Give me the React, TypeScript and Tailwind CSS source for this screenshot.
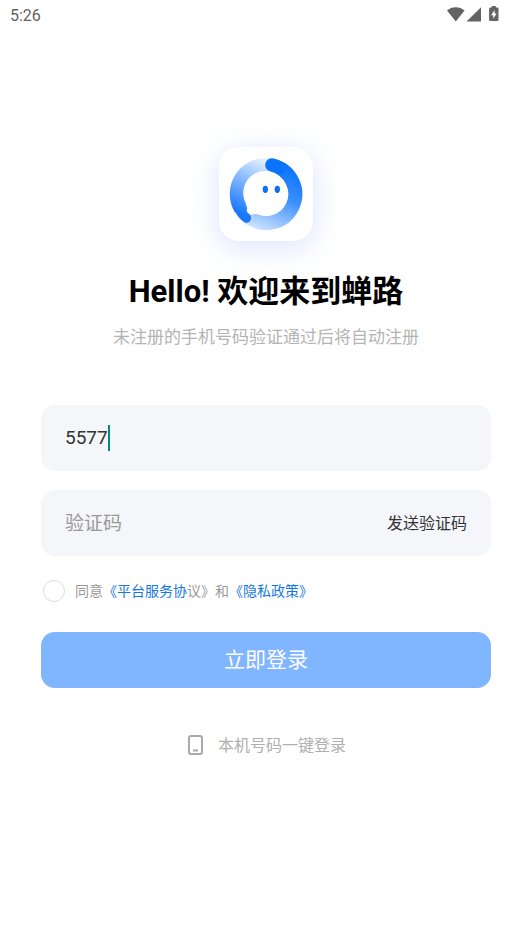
import { useState } from "react";

function StatusIcons() {
  return (
    <svg width="54" height="18" viewBox="0 0 54 18" fill="#636363" aria-hidden="true">
      <path d="M1 4.6C3.400 2.400 6.400 1.200 9.800 1.200s6.400 1.200 8.800 3.400L9.800 15.600Z" />
      <path d="M35 1.200V15.600H20.500Z" />
      <path
        fillRule="evenodd"
        d="M45.800 0h4v1.500h1.700q1 0 1 1v11.600q0 1-1 1h-7.400q-1 0-1-1V2.500q0-1 1-1h1.700ZM48.600 4l-3.600 5.200h2.200v3.600l3.400-5.200h-2Z"
      />
    </svg>
  );
}

function Logo() {
  return (
    <svg className="size-full" viewBox="0 0 282 282" role="img" aria-label="蝉路">
      <defs>
        <linearGradient id="right" gradientUnits="userSpaceOnUse" x1="200" y1="50" x2="120" y2="250">
          <stop offset="0" stopColor="#0a74fb" />
          <stop offset="0.45" stopColor="#3a8eff" />
          <stop offset="1" stopColor="#d0e4ff" />
        </linearGradient>
        <linearGradient id="left" gradientUnits="userSpaceOnUse" x1="140" y1="40" x2="60" y2="195">
          <stop offset="0" stopColor="#e6f1ff" />
          <stop offset="0.5" stopColor="#7db5ff" />
          <stop offset="1" stopColor="#1a79fb" />
        </linearGradient>
      </defs>
      <path d="M159 56A87 87 0 1 1 86 208" fill="none" stroke="url(#right)" strokeWidth="42" />
      <path d="M160 56A87 87 0 0 0 66 186" fill="none" stroke="url(#left)" strokeWidth="42" />
      <path d="M159 54A87 87 0 0 1 180 63" fill="none" stroke="#0a74fb" strokeWidth="41" strokeLinecap="round" />
      <path d="M141 72A66 66 0 1 1 128 203C116 200 106 200 94 204L80 192V168A66 66 0 0 1 141 72Z" fill="#fff" />
      {/* tapered end of the left arc */}
      <path d="M44 186C52 204 64 218 76 226C89 232 100 219 95 206C92 200 86 198 84 194C82 190 86 186 83 178L79 168Z" fill="url(#left)" />
      <ellipse cx="139" cy="127" rx="8" ry="11" fill="#0a70f5" />
      <ellipse cx="175" cy="127" rx="8" ry="11" fill="#0a70f5" />
    </svg>
  );
}

export default function App() {
  const [phone, setPhone] = useState("5577");
  const [code, setCode] = useState("");

  return (
    <div className="min-h-screen bg-white font-[Roboto,'Noto_Sans_CJK_SC',sans-serif] text-[#333]">
      <header className="flex h-[30px] items-center justify-between pr-8 pl-[10px] text-[16px] text-[#636363]">
        <time className="pt-px">5:26</time>
        <StatusIcons />
      </header>

      <main className="flex flex-col px-[41px] pt-[117px]">
        <div className="size-[94px] self-center rounded-[20px] bg-white shadow-[0_6px_28px_2px_#dfe6ff]">
          <Logo />
        </div>

        <h1 className="mt-[31px] text-center text-[31px] leading-10 font-bold text-black">Hello! 欢迎来到蝉路</h1>
        <p className="mt-[13px] text-center text-[17px] leading-6 text-[#b4b4b4]">
          未注册的手机号码验证通过后将自动注册
        </p>

        <form className="mt-14 flex flex-col" onSubmit={(e) => e.preventDefault()}>
          <div className="flex flex-col gap-[19px]">
            <label className="flex h-[66px] items-center rounded-[14px] bg-[#f5f6fa] px-6">
              <input
                type="tel"
                aria-label="手机号"
                value={phone}
                onChange={(e) => setPhone(e.target.value)}
                className="field-sizing-content text-[19px] caret-transparent outline-none"
              />
              <span className="h-[26px] w-[2px] bg-[#00897b]" />
            </label>

            <div className="flex h-[66px] items-center rounded-[14px] bg-[#f5f6fa] px-6 pt-[2px]">
              <input
                type="text"
                aria-label="验证码"
                placeholder="验证码"
                value={code}
                onChange={(e) => setCode(e.target.value)}
                className="min-w-0 flex-1 text-[19px] outline-none placeholder:text-[#999]"
              />
              <button type="button" className="text-[16px]">
                发送验证码
              </button>
            </div>
          </div>

          <div className="mt-6 flex h-[22px] items-center gap-[10px] pl-[2px] text-[14px] text-[#999]">
            <input
              id="agree"
              type="checkbox"
              className="size-[22px] appearance-none rounded-full border border-[#ddd] checked:bg-[#1677e0]"
            />
            <label htmlFor="agree">
              同意
              <a href="#terms">
                <span className="text-[#1677e0]">《平台服务协</span>议》
              </a>
              和
              <a href="#privacy" className="text-[#1677e0]">
                《隐私政策》
              </a>
            </label>
          </div>

          <button type="submit" className="mt-[30px] h-14 rounded-[14px] bg-[#80b5ff] pt-[2px] text-[21px] text-white">
            立即登录
          </button>
        </form>

        <button type="button" className="mt-[45px] flex h-6 items-center gap-3 self-center text-[16px] text-[#b0b0b0]">
          <svg width="20" height="24" viewBox="0 0 20 24" fill="none" stroke="#aaa" strokeWidth="2" aria-hidden="true">
            <rect x="3" y="3" width="13" height="18" rx="2" />
            <path d="M7 17.500h5" />
          </svg>
          <span className="pt-[2px]">本机号码一键登录</span>
        </button>
      </main>
    </div>
  );
}
